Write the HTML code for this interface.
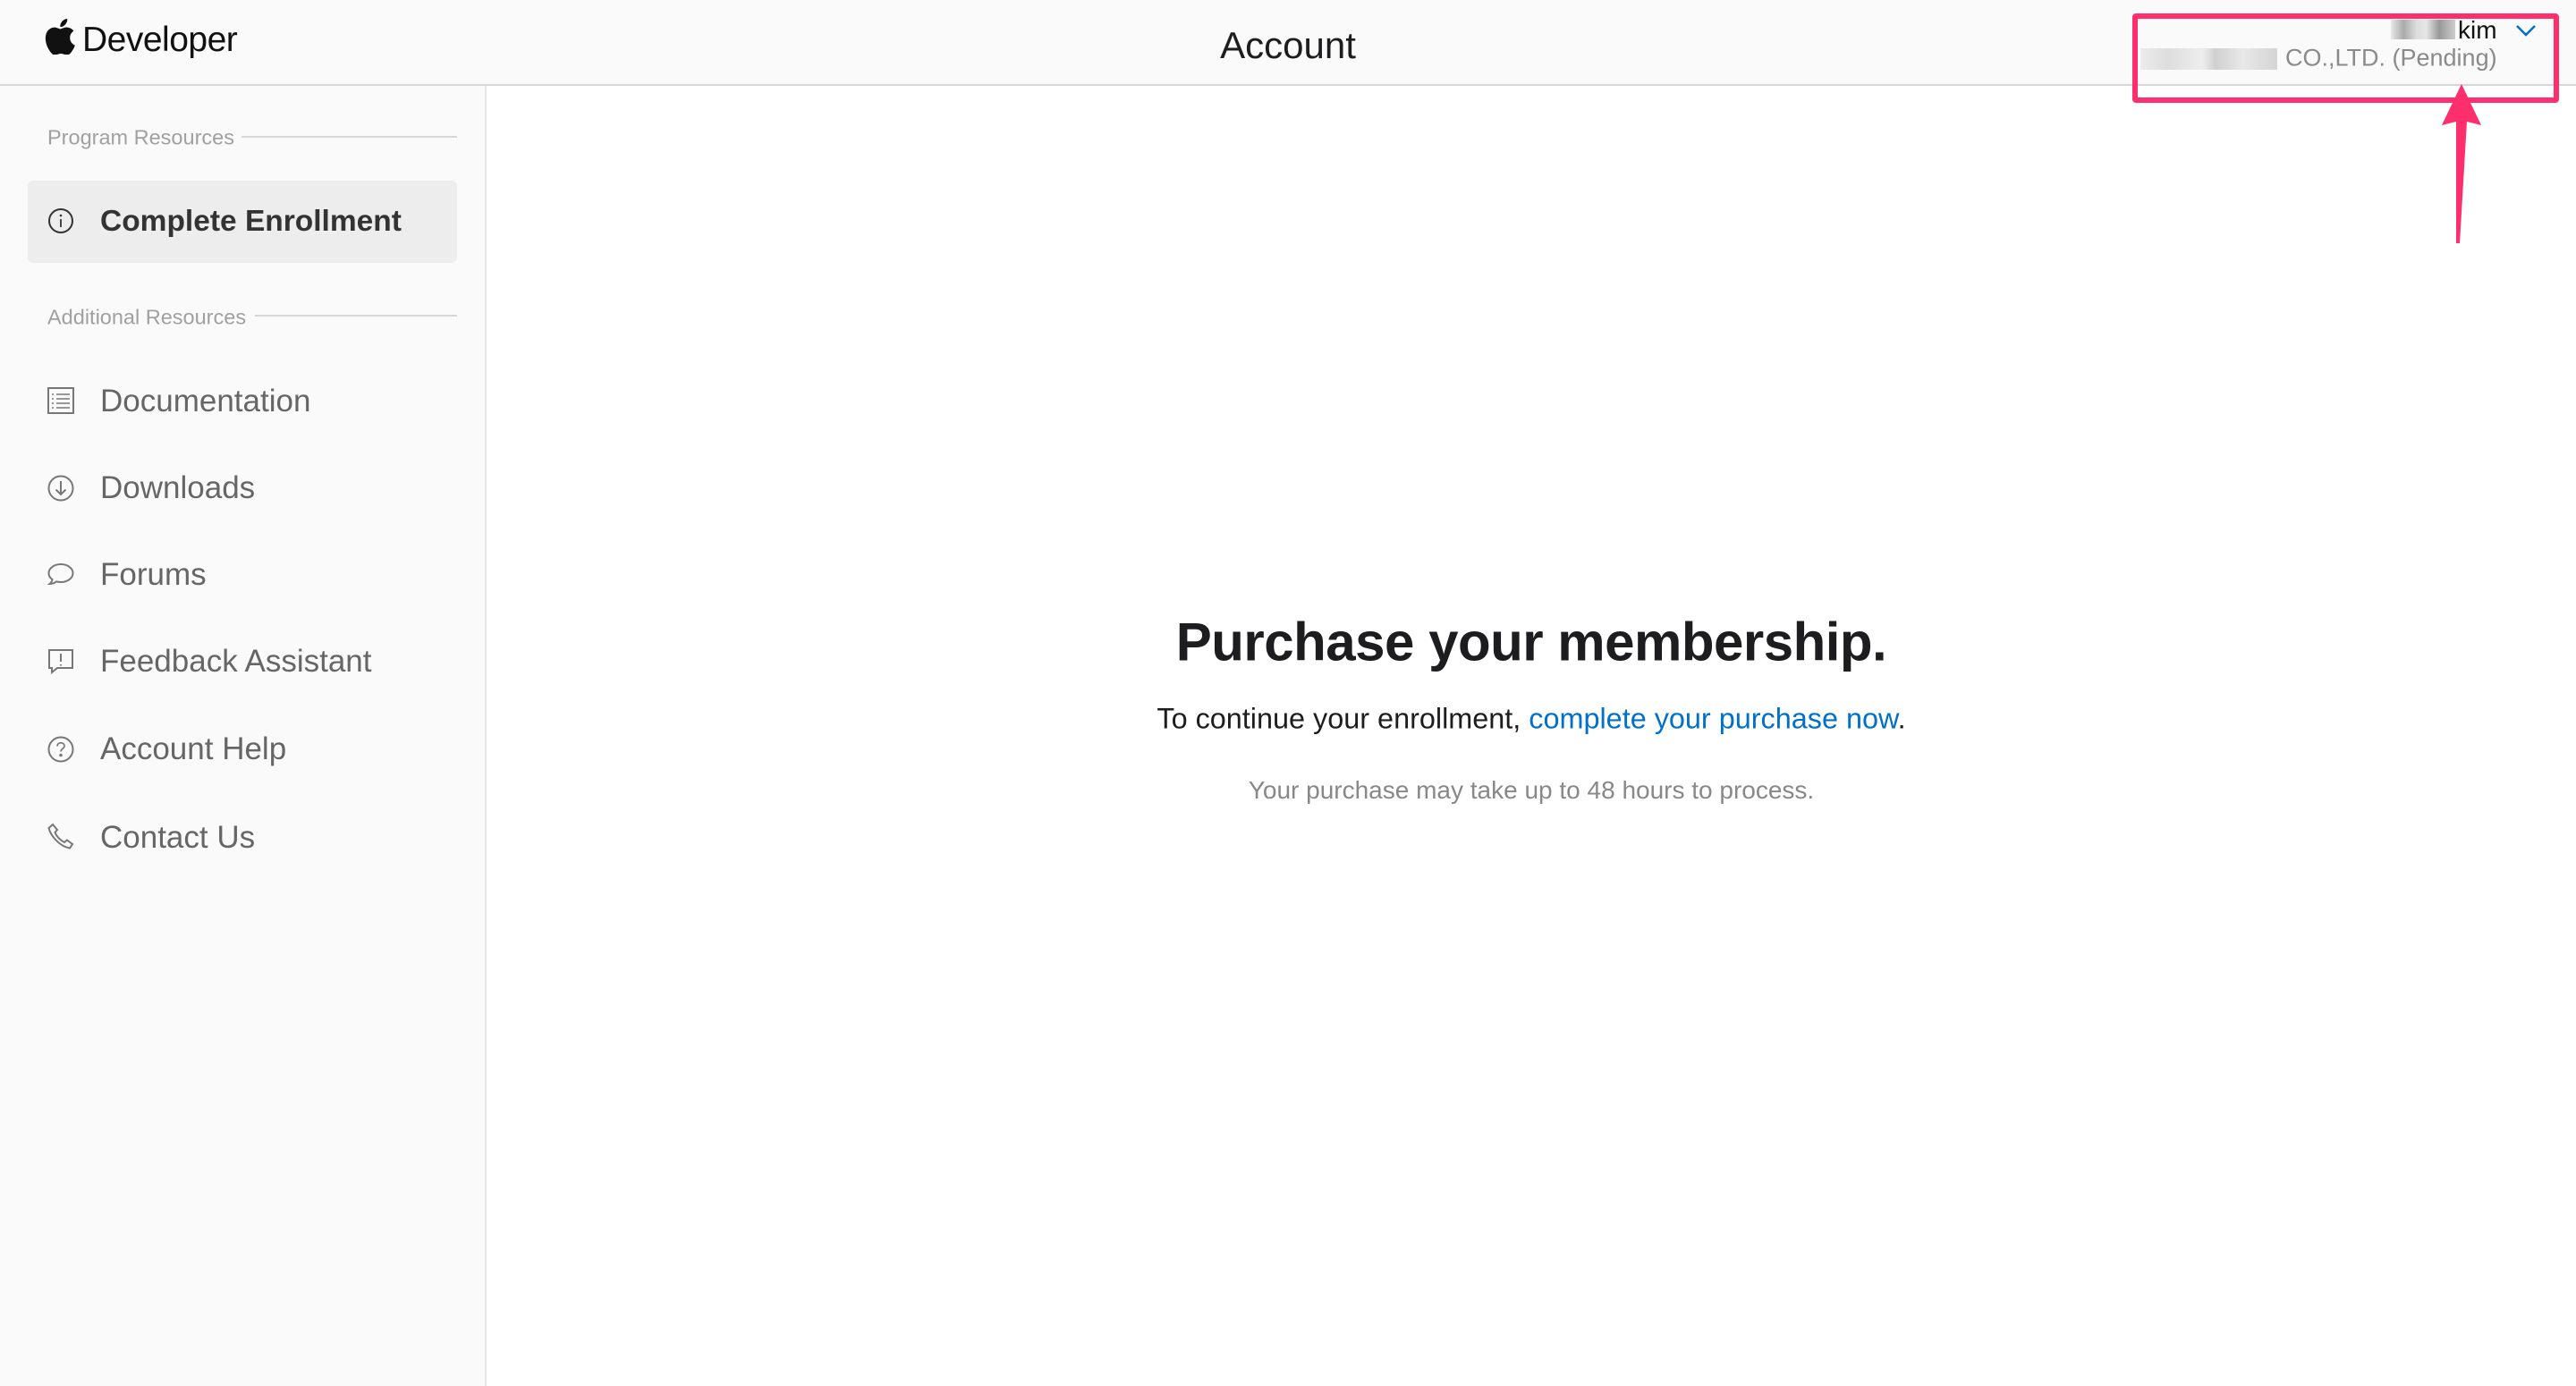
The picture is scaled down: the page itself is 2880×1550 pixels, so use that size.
<!DOCTYPE html>
<html><head><meta charset="utf-8"><style>
*{margin:0;padding:0;box-sizing:border-box}
html,body{width:2880px;height:1550px;overflow:hidden;background:#fff;font-family:"Liberation Sans",Arial,sans-serif}
.a{position:absolute;white-space:nowrap}
.c{transform:translateY(-50%)}
#hdr{position:absolute;left:0;top:0;width:2880px;height:96px;background:#fafafa;border-bottom:2px solid #d6d6d9}
#side{position:absolute;left:0;top:96px;width:544px;height:1454px;background:#fafafa;border-right:2px solid #e6e6e6}
.sec{font-size:23.5px;color:#a0a0a0}
.line{position:absolute;height:2px;background:#d6d6d9}
.item{font-size:35px;color:#666}
.ic{position:absolute;left:52px;width:32px;height:32px}
</style></head><body>
<div id="hdr"></div>
<div id="side"></div>

<svg class="a" style="left:50px;top:21px" width="34" height="40" viewBox="0 0 17 20"><path fill="#111" d="M14.1 10.6c0-2.5 2-3.7 2.1-3.8-1.2-1.7-3-1.9-3.6-2-1.5-.2-3 .9-3.800.9s-2-.9-3.3-.9C3.8 4.8 2.2 5.8 1.3 7.3c-1.8 3.2-.5 7.8 1.3 10.4.9 1.3 1.9 2.7 3.2 2.6 1.3-.1 1.8-.8 3.3-.8s2 .8 3.3.8c1.4 0 2.3-1.3 3.1-2.6 1-1.4 1.4-2.8 1.4-2.900 0 0-2.8-1.1-2.8-4.2zM11.6 3.1c.7-.9 1.2-2 1-3.1-1 0-2.2.7-2.9 1.5-.6.7-1.2 1.9-1 3 1.1.1 2.2-.6 2.9-1.4z"/></svg>
<div class="a c" style="left:92px;top:45px;font-size:39px;color:#111;letter-spacing:-0.5px">Developer</div>
<div class="a c" style="left:1340px;top:51px;width:200px;text-align:center;font-size:42px;color:#1d1d1f">Account</div>

<div class="a c sec" style="left:53px;top:154px">Program Resources</div>
<div class="line" style="left:270px;top:152px;width:241px"></div>
<div class="a" style="left:31px;top:202px;width:480px;height:92px;background:#ededed;border-radius:6px"></div>
<svg class="ic" style="top:231px" viewBox="0 0 32 32"><circle cx="16" cy="16" r="13" fill="none" stroke="#333" stroke-width="2"/><circle cx="16" cy="10" r="1.3" fill="#333"/><path d="M16 14v9" stroke="#333" stroke-width="1.8"/></svg>
<div class="a c" style="left:112px;top:248px;font-size:33.5px;font-weight:bold;color:#333">Complete Enrollment</div>

<div class="a c sec" style="left:53px;top:355px">Additional Resources</div>
<div class="line" style="left:285px;top:352px;width:226px"></div>

<svg class="ic" style="top:432px" viewBox="0 0 32 32" fill="none" stroke="#777" stroke-width="2"><rect x="2" y="2" width="28" height="28"/><path d="M6 9h2M11 9h15M6 14h2M11 14h15M6 19h2M11 19h15M6 24h2M11 24h15" stroke-width="1.6"/></svg>
<div class="a c item" style="left:112px;top:449px">Documentation</div>
<svg class="ic" style="top:530px" viewBox="0 0 32 32" fill="none" stroke="#777" stroke-width="2"><circle cx="16" cy="16" r="13.5"/><path d="M16 8v15M10.5 17.5L16 23l5.5-5.5"/></svg>
<div class="a c item" style="left:112px;top:546px">Downloads</div>
<svg class="ic" style="top:627px" viewBox="0 0 32 32" fill="none" stroke="#777" stroke-width="2"><path d="M16 4C8.5 4 2.5 8.5 2.5 14c0 3 1.6 5.4 4 7-.3 2-1.4 3.7-3 5 3.5 0 6-1.3 7.5-2.6 1.6.4 3.2.6 5 .6 7.5 0 13.5-4.5 13.5-10S23.5 4 16 4z"/></svg>
<div class="a c item" style="left:112px;top:643px">Forums</div>
<svg class="ic" style="top:724px" viewBox="0 0 32 32" fill="none" stroke="#777" stroke-width="2"><path d="M3 3h26v20H12l-6 5v-5H3z"/><path d="M16 7v9M16 19v1.5"/></svg>
<div class="a c item" style="left:112px;top:740px">Feedback Assistant</div>
<svg class="ic" style="top:822px" viewBox="0 0 32 32" fill="none" stroke="#777" stroke-width="2"><circle cx="16" cy="16" r="13.5"/><path d="M12 12.5c0-2.3 1.8-3.8 4-3.8s4 1.4 4 3.5c0 3-4 3-4 6.3" stroke-width="1.7"/><circle cx="16" cy="22.5" r=".8" fill="#777"/></svg>
<div class="a c item" style="left:112px;top:838px">Account Help</div>
<svg class="ic" style="top:920px" viewBox="0 0 32 32" fill="none" stroke="#777" stroke-width="2"><path d="M7 2l5 6-2.5 3c1.5 4 5.5 8.5 10.5 11l3-2.5 6 4.5-3 4.5C16 27 5 16 2.5 6z"/></svg>
<div class="a c item" style="left:112px;top:937px">Contact Us</div>

<div class="a c" style="left:1044px;width:1336px;top:718px;text-align:center;font-size:60px;font-weight:bold;color:#1d1d1f;letter-spacing:-0.5px">Purchase your membership.</div>
<div class="a c" style="left:1044px;width:1336px;top:804px;text-align:center;font-size:32.4px;color:#1d1d1f">To continue your enrollment, <span style="color:#0070c9">complete your purchase now</span>.</div>
<div class="a c" style="left:1044px;width:1336px;top:884px;text-align:center;font-size:28px;color:#888">Your purchase may take up to 48 hours to process.</div>

<div class="a" style="left:2673px;top:22px;width:72px;height:22px;background:linear-gradient(90deg,#e8e8e8,#aaa 20%,#ddd 40%,#e6e6e6 55%,#999 75%,#ccc)"></div>
<div class="a c" style="left:2748px;top:34px;font-size:28px;color:#111">kim</div>
<svg class="a" style="left:2812px;top:27px" width="24" height="14" viewBox="0 0 24 14"><path d="M2 2l10 10L22 2" fill="none" stroke="#0070c9" stroke-width="2.5"/></svg>
<div class="a" style="left:2393px;top:54px;width:153px;height:24px;background:linear-gradient(90deg,#ececec,#ddd 20%,#eee 45%,#d0d0d0 55%,#e8e8e8 75%,#d4d4d4)"></div>
<div class="a c" style="left:2555px;top:65px;font-size:27px;color:#8a8a8a">CO.,LTD. (Pending)</div>

<div class="a" style="left:2384px;top:15px;width:477px;height:100px;border:6px solid #ff2f6e;border-radius:4px"></div>
<svg class="a" style="left:2720px;top:90px" width="64" height="186" viewBox="0 0 64 186"><path d="M32 4L54 50 38 46 30 182 26 182 26 46 10 50z" fill="#ff2f6e"/></svg>
</body></html>
